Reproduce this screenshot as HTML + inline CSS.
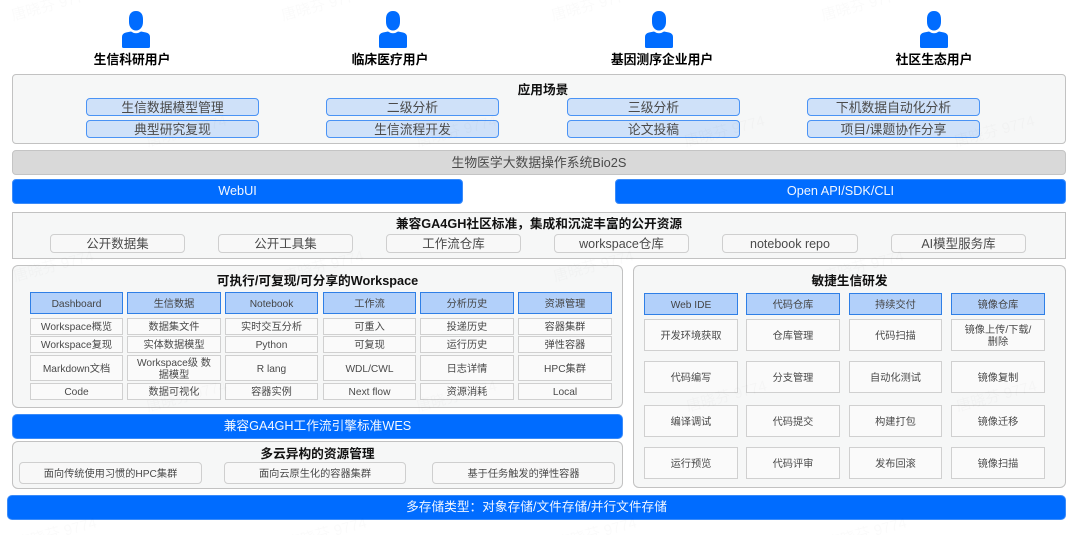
<!DOCTYPE html>
<html><head><meta charset="utf-8">
<style>
html,body{margin:0;padding:0;background:#fff}
#p{position:relative;width:1080px;height:535px;overflow:hidden;background:#fff;font-family:"Liberation Sans","Noto Sans CJK SC",sans-serif;color:#333;filter:blur(.3px)}
.b{position:absolute;box-sizing:border-box;display:flex;align-items:center;justify-content:center;text-align:center;line-height:1.2}
.box{background:#f6f7f7;border:1.5px solid #c2c2c2;border-radius:4px}
.t{font-weight:bold;font-size:12.7px;color:#111;white-space:nowrap;padding-top:4px}
.u{font-weight:bold;font-size:12.8px;color:#000;white-space:nowrap}
.c{background:#cfe1f9;border:1.5px solid #4a93f5;border-radius:4px;font-size:12.8px;color:#4a4a4a;padding-top:2px}
.bl{background:#006cff;border:1px solid #3b8bf8;border-radius:4px;color:#f2f7ff;font-size:12.7px;padding-top:1px}
.g{background:#f8f8f8;border:1.5px solid #cfcfcf;border-radius:4px;font-size:12.5px;color:#4a4a4a;padding-top:2px}
.g2{background:#f8f8f8;border:1.5px solid #cfcfcf;border-radius:4px;font-size:10.2px;color:#4a4a4a;padding-top:4px}
.h{background:#b2d0fa;border:1.5px solid #2f7fe6;font-size:10.2px;color:#444;padding-top:4px}
.k{background:#fafafa;border:1.5px solid #d0d0d0;font-size:10.2px;color:#4a4a4a;padding:4px 0 0}
.w{position:absolute;font-size:15px;color:rgba(0,0,0,.018);transform:rotate(-15deg);white-space:nowrap}
svg{position:absolute}
</style></head><body><div id="p">

<svg style="left:122px;top:11px" width="28" height="37" viewBox="0 0 28 37"><path fill="#006cff" d="M14 0C18.500 0 21 3 21 8V11C21 16 18 19.500 14 19.500C10 19.500 7 16 7 11V8C7 3 9.500 0 14 0ZM1.500 37Q0 37 0 35.500V26Q0 22.500 4 21.500L9 20.500Q14 24 19 20.500L24 21.500Q28 22.500 28 26V35.500Q28 37 26.500 37Z"/></svg>
<svg style="left:379px;top:11px" width="28" height="37" viewBox="0 0 28 37"><path fill="#006cff" d="M14 0C18.500 0 21 3 21 8V11C21 16 18 19.500 14 19.500C10 19.500 7 16 7 11V8C7 3 9.500 0 14 0ZM1.500 37Q0 37 0 35.500V26Q0 22.500 4 21.500L9 20.500Q14 24 19 20.500L24 21.500Q28 22.500 28 26V35.500Q28 37 26.500 37Z"/></svg>
<svg style="left:645px;top:11px" width="28" height="37" viewBox="0 0 28 37"><path fill="#006cff" d="M14 0C18.500 0 21 3 21 8V11C21 16 18 19.500 14 19.500C10 19.500 7 16 7 11V8C7 3 9.500 0 14 0ZM1.500 37Q0 37 0 35.500V26Q0 22.500 4 21.500L9 20.500Q14 24 19 20.500L24 21.500Q28 22.500 28 26V35.500Q28 37 26.500 37Z"/></svg>
<svg style="left:920px;top:11px" width="28" height="37" viewBox="0 0 28 37"><path fill="#006cff" d="M14 0C18.500 0 21 3 21 8V11C21 16 18 19.500 14 19.500C10 19.500 7 16 7 11V8C7 3 9.500 0 14 0ZM1.500 37Q0 37 0 35.500V26Q0 22.500 4 21.500L9 20.500Q14 24 19 20.500L24 21.500Q28 22.500 28 26V35.500Q28 37 26.500 37Z"/></svg>

<div class="b u" style="left:82px;top:51px;width:100px;height:18px">生信科研用户</div>
<div class="b u" style="left:340px;top:51px;width:100px;height:18px">临床医疗用户</div>
<div class="b u" style="left:592px;top:51px;width:140px;height:18px">基因测序企业用户</div>
<div class="b u" style="left:884px;top:51px;width:100px;height:18px">社区生态用户</div>

<div class="b box" style="left:12px;top:74px;width:1054px;height:70px"></div>
<div class="b t" style="left:12px;top:80px;width:1062px;height:18px">应用场景</div>
<div class="b c" style="left:86px;top:98px;width:173px;height:18px">生信数据模型管理</div>
<div class="b c" style="left:326px;top:98px;width:173px;height:18px">二级分析</div>
<div class="b c" style="left:567px;top:98px;width:173px;height:18px">三级分析</div>
<div class="b c" style="left:807px;top:98px;width:173px;height:18px">下机数据自动化分析</div>
<div class="b c" style="left:86px;top:120px;width:173px;height:18px">典型研究复现</div>
<div class="b c" style="left:326px;top:120px;width:173px;height:18px">生信流程开发</div>
<div class="b c" style="left:567px;top:120px;width:173px;height:18px">论文投稿</div>
<div class="b c" style="left:807px;top:120px;width:173px;height:18px">项目/课题协作分享</div>

<div class="b" style="left:12px;top:150px;width:1054px;height:25px;background:#d9d9d9;border:1.5px solid #c4c4c4;border-radius:4px;font-size:12.8px;color:#4a4a4a">生物医学大数据操作系统Bio2S</div>
<div class="b bl" style="left:12px;top:179px;width:451px;height:25px">WebUI</div>
<div class="b bl" style="left:615px;top:179px;width:451px;height:25px">Open API/SDK/CLI</div>

<div class="b box" style="left:12px;top:212px;width:1054px;height:47px;border-radius:0"></div>
<div class="b t" style="left:12px;top:214px;width:1054px;height:18px">兼容GA4GH社区标准，集成和沉淀丰富的公开资源</div>
<div class="b g" style="left:50px;top:234px;width:135px;height:19px">公开数据集</div>
<div class="b g" style="left:218px;top:234px;width:135px;height:19px">公开工具集</div>
<div class="b g" style="left:386px;top:234px;width:135px;height:19px">工作流仓库</div>
<div class="b g" style="left:554px;top:234px;width:135px;height:19px">workspace仓库</div>
<div class="b g" style="left:722px;top:234px;width:136px;height:19px">notebook repo</div>
<div class="b g" style="left:891px;top:234px;width:135px;height:19px">AI模型服务库</div>

<div class="b box" style="left:12px;top:265px;width:611px;height:143px;border-radius:6px"></div>
<div class="b t" style="left:12px;top:271px;width:611px;height:18px">可执行/可复现/可分享的Workspace</div>
<div class="b h" style="left:30px;top:292px;width:93px;height:22px">Dashboard</div>
<div class="b h" style="left:127px;top:292px;width:94px;height:22px">生信数据</div>
<div class="b h" style="left:225px;top:292px;width:93px;height:22px">Notebook</div>
<div class="b h" style="left:323px;top:292px;width:93px;height:22px">工作流</div>
<div class="b h" style="left:420px;top:292px;width:94px;height:22px">分析历史</div>
<div class="b h" style="left:518px;top:292px;width:94px;height:22px">资源管理</div>

<div class="b k" style="left:30px;top:318px;width:93px;height:17px">Workspace概览</div>
<div class="b k" style="left:127px;top:318px;width:94px;height:17px">数据集文件</div>
<div class="b k" style="left:225px;top:318px;width:93px;height:17px">实时交互分析</div>
<div class="b k" style="left:323px;top:318px;width:93px;height:17px">可重入</div>
<div class="b k" style="left:420px;top:318px;width:94px;height:17px">投递历史</div>
<div class="b k" style="left:518px;top:318px;width:94px;height:17px">容器集群</div>

<div class="b k" style="left:30px;top:336px;width:93px;height:17px">Workspace复现</div>
<div class="b k" style="left:127px;top:336px;width:94px;height:17px">实体数据模型</div>
<div class="b k" style="left:225px;top:336px;width:93px;height:17px">Python</div>
<div class="b k" style="left:323px;top:336px;width:93px;height:17px">可复现</div>
<div class="b k" style="left:420px;top:336px;width:94px;height:17px">运行历史</div>
<div class="b k" style="left:518px;top:336px;width:94px;height:17px">弹性容器</div>

<div class="b k" style="left:30px;top:355px;width:93px;height:26px">Markdown文档</div>
<div class="b k" style="left:127px;top:355px;width:94px;height:26px">Workspace级 数<br>据模型</div>
<div class="b k" style="left:225px;top:355px;width:93px;height:26px">R lang</div>
<div class="b k" style="left:323px;top:355px;width:93px;height:26px">WDL/CWL</div>
<div class="b k" style="left:420px;top:355px;width:94px;height:26px">日志详情</div>
<div class="b k" style="left:518px;top:355px;width:94px;height:26px">HPC集群</div>

<div class="b k" style="left:30px;top:383px;width:93px;height:17px">Code</div>
<div class="b k" style="left:127px;top:383px;width:94px;height:17px">数据可视化</div>
<div class="b k" style="left:225px;top:383px;width:93px;height:17px">容器实例</div>
<div class="b k" style="left:323px;top:383px;width:93px;height:17px">Next flow</div>
<div class="b k" style="left:420px;top:383px;width:94px;height:17px">资源消耗</div>
<div class="b k" style="left:518px;top:383px;width:94px;height:17px">Local</div>

<div class="b bl" style="left:12px;top:414px;width:611px;height:25px;border-radius:5px">兼容GA4GH工作流引擎标准WES</div>

<div class="b box" style="left:12px;top:441px;width:611px;height:48px;border-radius:6px"></div>
<div class="b t" style="left:12px;top:444px;width:611px;height:18px">多云异构的资源管理</div>
<div class="b g2" style="left:19px;top:462px;width:183px;height:22px">面向传统使用习惯的HPC集群</div>
<div class="b g2" style="left:224px;top:462px;width:182px;height:22px">面向云原生化的容器集群</div>
<div class="b g2" style="left:432px;top:462px;width:183px;height:22px">基于任务触发的弹性容器</div>

<div class="b bl" style="left:7px;top:495px;width:1059px;height:25px;border-radius:5px">多存储类型：对象存储/文件存储/并行文件存储</div>

<div class="b box" style="left:633px;top:265px;width:433px;height:223px;border-radius:6px"></div>
<div class="b t" style="left:633px;top:271px;width:433px;height:18px">敏捷生信研发</div>
<div class="b h" style="left:644px;top:293px;width:94px;height:22px">Web IDE</div>
<div class="b h" style="left:746px;top:293px;width:94px;height:22px">代码仓库</div>
<div class="b h" style="left:849px;top:293px;width:93px;height:22px">持续交付</div>
<div class="b h" style="left:951px;top:293px;width:94px;height:22px">镜像仓库</div>

<div class="b k" style="left:644px;top:319px;width:94px;height:32px">开发环境获取</div>
<div class="b k" style="left:746px;top:319px;width:94px;height:32px">仓库管理</div>
<div class="b k" style="left:849px;top:319px;width:93px;height:32px">代码扫描</div>
<div class="b k" style="left:951px;top:319px;width:94px;height:32px">镜像上传/下载/<br>删除</div>

<div class="b k" style="left:644px;top:361px;width:94px;height:32px">代码编写</div>
<div class="b k" style="left:746px;top:361px;width:94px;height:32px">分支管理</div>
<div class="b k" style="left:849px;top:361px;width:93px;height:32px">自动化测试</div>
<div class="b k" style="left:951px;top:361px;width:94px;height:32px">镜像复制</div>

<div class="b k" style="left:644px;top:405px;width:94px;height:32px">编译调试</div>
<div class="b k" style="left:746px;top:405px;width:94px;height:32px">代码提交</div>
<div class="b k" style="left:849px;top:405px;width:93px;height:32px">构建打包</div>
<div class="b k" style="left:951px;top:405px;width:94px;height:32px">镜像迁移</div>

<div class="b k" style="left:644px;top:447px;width:94px;height:32px">运行预览</div>
<div class="b k" style="left:746px;top:447px;width:94px;height:32px">代码评审</div>
<div class="b k" style="left:849px;top:447px;width:93px;height:32px">发布回滚</div>
<div class="b k" style="left:951px;top:447px;width:94px;height:32px">镜像扫描</div>

<div class="w" style="left:10px;top:-6px">唐晓芬 9774</div>
<div class="w" style="left:280px;top:-6px">唐晓芬 9774</div>
<div class="w" style="left:550px;top:-6px">唐晓芬 9774</div>
<div class="w" style="left:820px;top:-6px">唐晓芬 9774</div>
<div class="w" style="left:145px;top:120px">唐晓芬 9774</div>
<div class="w" style="left:415px;top:120px">唐晓芬 9774</div>
<div class="w" style="left:683px;top:120px">唐晓芬 9774</div>
<div class="w" style="left:953px;top:120px">唐晓芬 9774</div>
<div class="w" style="left:12px;top:255px">唐晓芬 9774</div>
<div class="w" style="left:282px;top:255px">唐晓芬 9774</div>
<div class="w" style="left:552px;top:255px">唐晓芬 9774</div>
<div class="w" style="left:822px;top:255px">唐晓芬 9774</div>
<div class="w" style="left:145px;top:385px">唐晓芬 9774</div>
<div class="w" style="left:415px;top:385px">唐晓芬 9774</div>
<div class="w" style="left:685px;top:385px">唐晓芬 9774</div>
<div class="w" style="left:955px;top:385px">唐晓芬 9774</div>
<div class="w" style="left:15px;top:522px">唐晓芬 9774</div>
<div class="w" style="left:285px;top:522px">唐晓芬 9774</div>
<div class="w" style="left:555px;top:522px">唐晓芬 9774</div>
<div class="w" style="left:825px;top:522px">唐晓芬 9774</div>

</div></body></html>
